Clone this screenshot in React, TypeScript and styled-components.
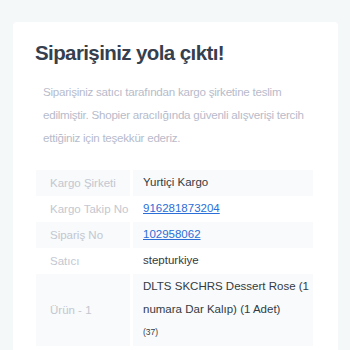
import React from 'react';
import styled, { createGlobalStyle } from 'styled-components';

const GlobalStyle = createGlobalStyle`
  html, body {
    margin: 0;
    padding: 0;
    background: #f5f8f8;
    font-family: "Liberation Sans", Arial, sans-serif;
  }
`;

const Page = styled.div`
  padding: 22px 12px 0 13px;
`;

const Card = styled.div`
  background: #ffffff;
  border-radius: 4px;
  padding: 15px 22px 24px 22px;
`;

const Title = styled.h1`
  margin: 0 0 11px;
  font-size: 20.5px;
  line-height: 32px;
  letter-spacing: -0.6px;
  font-weight: 700;
  color: #363f4e;
`;

const Intro = styled.p`
  margin: 0 0 21px;
  padding: 0 0 0 8px;
  font-size: 11.6px;
  line-height: 23px;
  letter-spacing: -0.25px;
  color: #b7bbcb;
`;

const InfoTable = styled.table`
  width: 277px;
  margin-left: 1px;
  border-collapse: collapse;
  table-layout: fixed;
  font-size: 11.5px;
`;

const Row = styled.tr<{ $striped: boolean }>`
  background: ${p => (p.$striped ? '#f8fafb' : '#ffffff')};
`;

const Label = styled.td`
  width: 80px;
  height: 22px;
  padding: 2px 0 2px 14px;
  line-height: 22px;
  color: #c3c7d1;
  white-space: nowrap;
  vertical-align: middle;
  border-right: 3px solid #ffffff;
`;

const Value = styled.td`
  height: 22px;
  padding: 1px 4px 2px 10px;
  line-height: 23px;
  color: #333a44;
  vertical-align: middle;
`;

const Link = styled.a`
  color: #2a6ed8;
  text-decoration: underline;
`;

const Small = styled.div`
  font-size: 8.5px;
  line-height: 23px;
`;

const App: React.FC = () => {
  return (
    <>
      <GlobalStyle />
      <Page>
        <Card>
          <Title>Siparişiniz yola çıktı!</Title>
          <Intro>
            Siparişiniz satıcı tarafından kargo şirketine teslim edilmiştir. Shopier aracılığında güvenli
            alışverişi tercih ettiğiniz için teşekkür ederiz.
          </Intro>
          <InfoTable>
            <tbody>
              <Row $striped>
                <Label>Kargo Şirketi</Label>
                <Value>Yurtiçi Kargo</Value>
              </Row>
              <Row $striped={false}>
                <Label>Kargo Takip No</Label>
                <Value>
                  <Link href="#">916281873204</Link>
                </Value>
              </Row>
              <Row $striped>
                <Label>Sipariş No</Label>
                <Value>
                  <Link href="#">102958062</Link>
                </Value>
              </Row>
              <Row $striped={false}>
                <Label>Satıcı</Label>
                <Value>stepturkiye</Value>
              </Row>
              <Row $striped>
                <Label>Ürün - 1</Label>
                <Value>
                  DLTS SKCHRS Dessert Rose (1 numara Dar Kalıp) (1 Adet)
                  <Small>(37)</Small>
                </Value>
              </Row>
            </tbody>
          </InfoTable>
        </Card>
      </Page>
    </>
  );
};

export default App;
